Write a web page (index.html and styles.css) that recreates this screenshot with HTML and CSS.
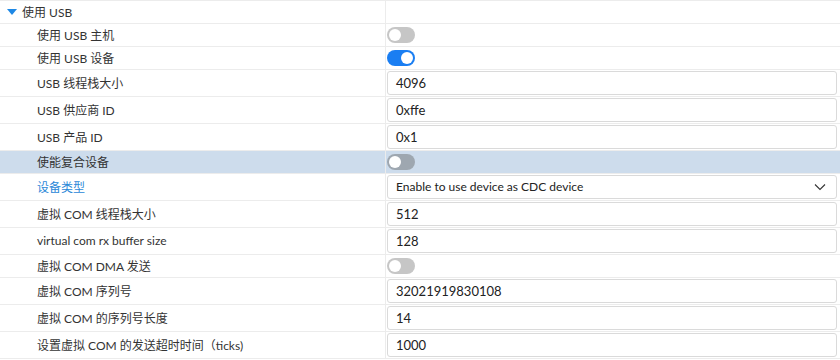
FILE: index.html
```html
<!DOCTYPE html>
<html lang="zh-CN">

<head>
    <meta charset="UTF-8">
    <meta name="viewport" content="width=device-width, initial-scale=1.0">
    <title>USB 配置</title>
    <link rel="stylesheet" href="styles.css">
</head>

<body>
    <main class="props">
        <div class="row group">
            <div class="name"><span class="caret"></span>使用 USB</div>
            <div class="value"></div>
        </div>
        <div class="row small">
            <div class="name child">使用 USB 主机</div>
            <div class="value"><span class="switch"></span></div>
        </div>
        <div class="row small">
            <div class="name child">使用 USB 设备</div>
            <div class="value"><span class="switch on"></span></div>
        </div>
        <div class="row">
            <div class="name child">USB 线程栈大小</div>
            <div class="value"><div class="field">4096</div></div>
        </div>
        <div class="row">
            <div class="name child">USB 供应商 ID</div>
            <div class="value"><div class="field">0xffe</div></div>
        </div>
        <div class="row">
            <div class="name child">USB 产品 ID</div>
            <div class="value"><div class="field">0x1</div></div>
        </div>
        <div class="row small selected">
            <div class="name child">使能复合设备</div>
            <div class="value"><span class="switch"></span></div>
        </div>
        <div class="row">
            <div class="name child link">设备类型</div>
            <div class="value">
                <div class="field select">
                    <span>Enable to use device as CDC device</span>
                    <svg width="12" height="8" viewBox="0 0 12 8">
                        <path d="M1 1.5 L6 6.5 L11 1.5" fill="none" stroke="#333" stroke-width="1.1"/>
                    </svg>
                </div>
            </div>
        </div>
        <div class="row">
            <div class="name child">虚拟 COM 线程栈大小</div>
            <div class="value"><div class="field">512</div></div>
        </div>
        <div class="row">
            <div class="name child">virtual com rx buffer size</div>
            <div class="value"><div class="field">128</div></div>
        </div>
        <div class="row small">
            <div class="name child">虚拟 COM DMA 发送</div>
            <div class="value"><span class="switch"></span></div>
        </div>
        <div class="row">
            <div class="name child">虚拟 COM 序列号</div>
            <div class="value"><div class="field">32021919830108</div></div>
        </div>
        <div class="row">
            <div class="name child">虚拟 COM 的序列号长度</div>
            <div class="value"><div class="field">14</div></div>
        </div>
        <div class="row">
            <div class="name child">设置虚拟 COM 的发送超时时间（ticks)</div>
            <div class="value"><div class="field">1000</div></div>
        </div>
    </main>
</body>

</html>
```

FILE: styles.css
```css
* {
    margin: 0;
    padding: 0;
    box-sizing: border-box;
}

body {
    background-color: #fff;
    font-family: Lato, "Noto Sans CJK SC", sans-serif;
    color: #333;
}

.props {
    width: 840px;
    border-top: 1px solid #ececec;
}

.row {
    display: flex;
    height: 27px;
    border-bottom: 1px solid #ececec;
}

.row.small,
.row.group {
    height: 23px;
}

.row.selected {
    background-color: #cddcec;
}

.name {
    width: 386px;
    border-right: 1px solid #ececec;
    display: flex;
    align-items: center;
    font-size: 12px;
    padding-left: 7px;
    padding-bottom: 1px;
    white-space: nowrap;
}

.name.child {
    padding-left: 37px;
}

.name.link {
    color: #2b88d8;
}

.caret {
    width: 0;
    height: 0;
    border-left: 5px solid transparent;
    border-right: 5px solid transparent;
    border-top: 6px solid #1e88e5;
    margin-right: 5px;
}

.value {
    flex: 1;
    display: flex;
    align-items: center;
    padding: 0 3px 0 1px;
}

.field {
    width: 100%;
    height: 24px;
    border: 1px solid #dadada;
    border-radius: 3px;
    background-color: #fff;
    font-size: 13px;
    color: #222;
    padding: 0 8px 1px;
    display: flex;
    align-items: center;
}

.select {
    font-size: 12px;
    justify-content: space-between;
    padding-right: 10px;
}

.switch {
    width: 28px;
    height: 16px;
    border-radius: 8px;
    background-color: #c6c6c6;
    position: relative;
}

.switch::after {
    content: "";
    position: absolute;
    left: 2px;
    top: 2px;
    width: 12px;
    height: 12px;
    border-radius: 50%;
    background-color: #fff;
}

.switch.on {
    background-color: #1a7ef2;
}

.switch.on::after {
    left: 14px;
}

.selected .switch {
    background-color: #9ea7b0;
}
```
